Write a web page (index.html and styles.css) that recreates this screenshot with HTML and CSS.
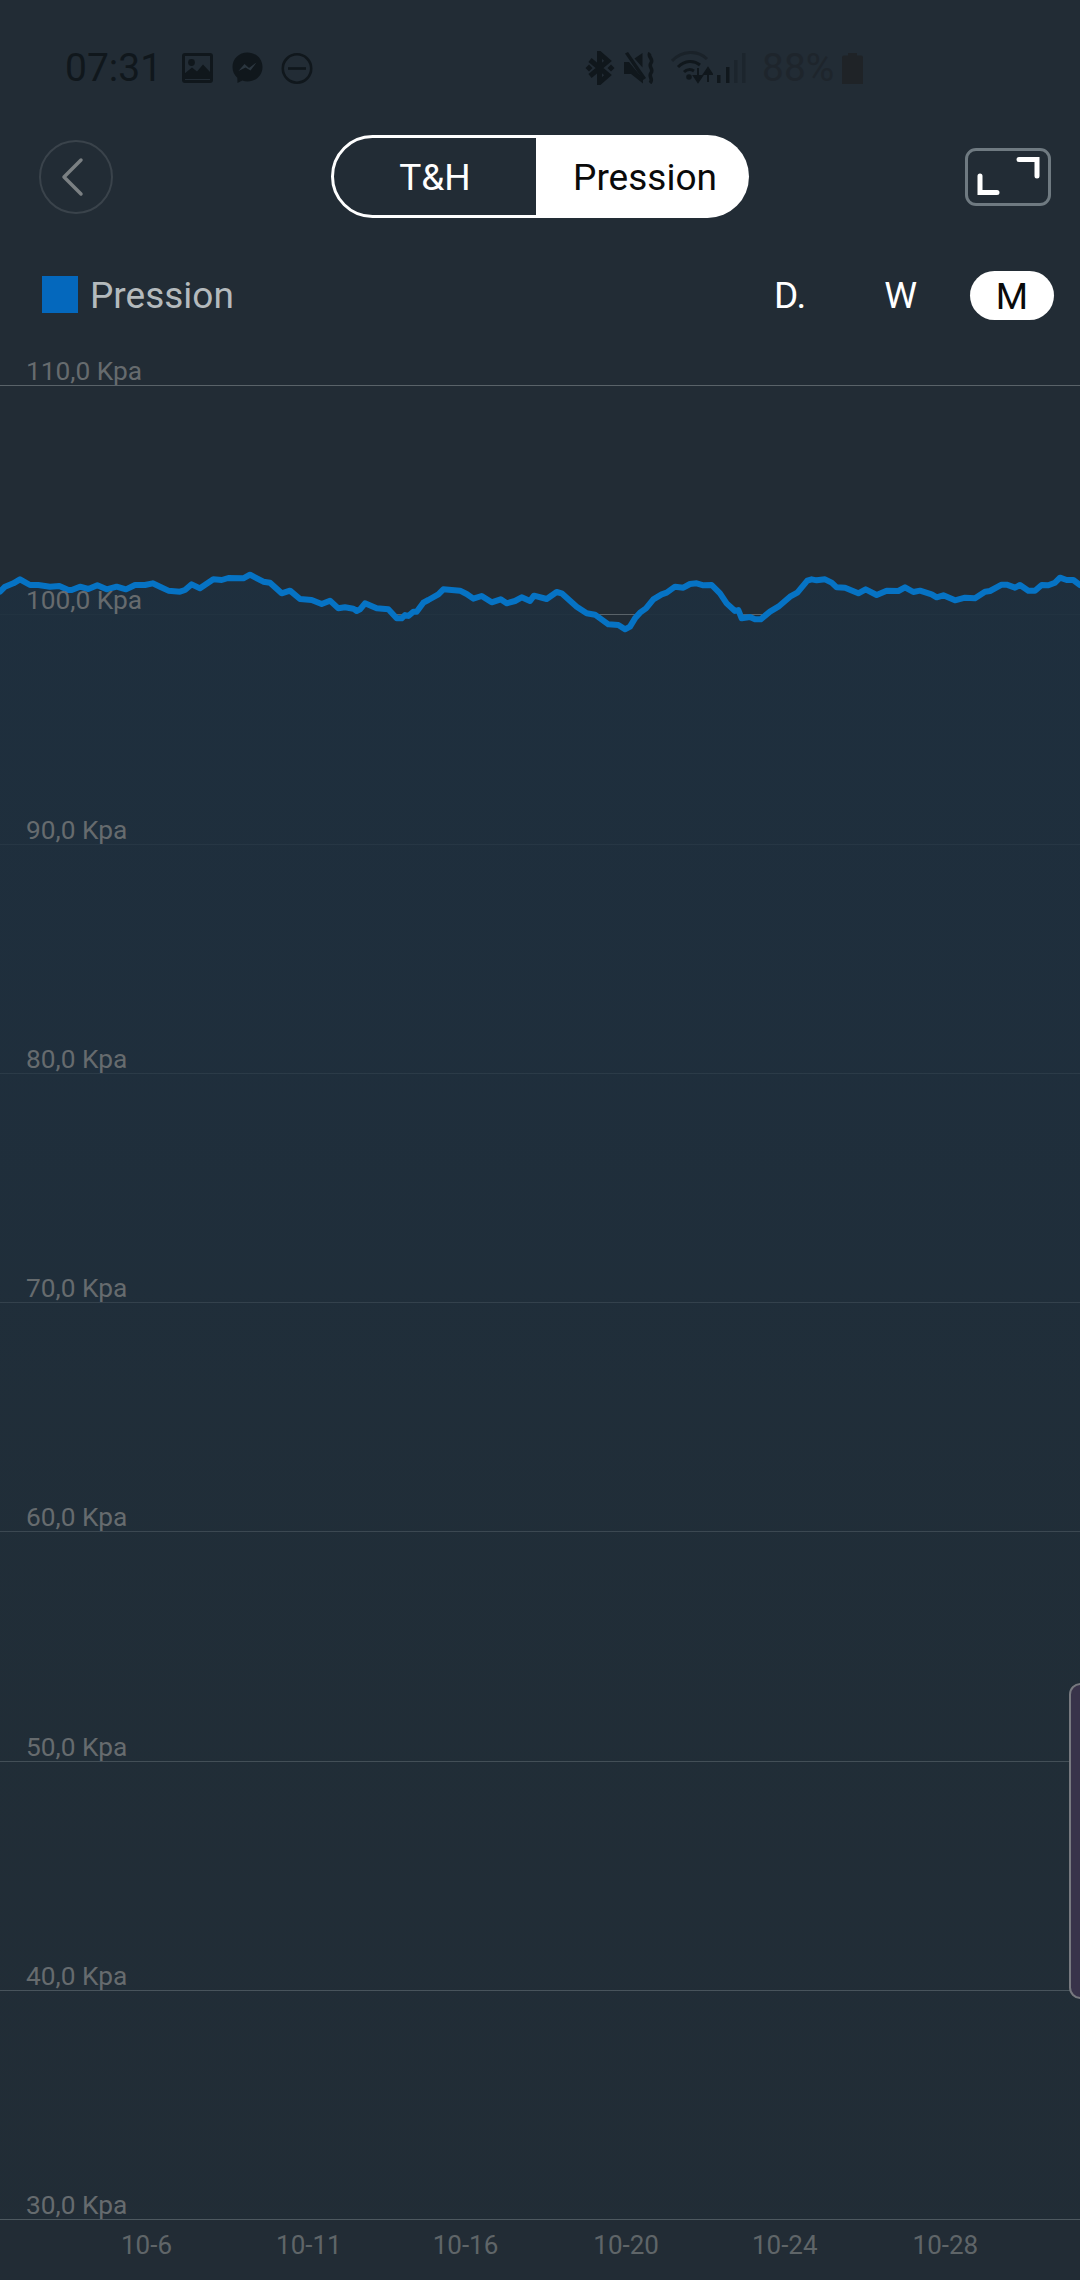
FILE: index.html
```html
<!DOCTYPE html>
<html lang="fr">
<head>
<meta charset="utf-8">
<title>Pression</title>
<link rel="stylesheet" href="styles.css">
</head>
<body>
<div class="app">
  <div class="status">
    <span class="time">07:31</span>
    <svg class="ic ic-image" width="31" height="30" viewBox="0 0 31 30"><rect x="1.500" y="1.500" width="28" height="27" rx="1.500" fill="none" stroke="#10171c" stroke-width="3"/><circle cx="9.500" cy="9.500" r="3.400" fill="#10171c"/><path d="M2 26 L2 21 L10 14.500 L15 18.500 L21 11.500 L29 20 L29 26 Z" fill="#10171c"/></svg>
    <svg class="ic ic-msg" width="31" height="32" viewBox="0 0 31 32"><path d="M15.500 0.500C7 0.500 0.500 6.800 0.500 15C0.500 19.400 2.300 23.100 5.300 25.700L5.500 31L10.300 28.600C12 29.200 13.700 29.500 15.500 29.500C24 29.500 30.500 23.200 30.500 15C30.500 6.800 24 0.500 15.500 0.500Z" fill="#10171c"/><path d="M6.500 19 L12.500 12 L17 16 L24.500 10.500 L18.500 18.500 L13.500 15.500 Z" fill="#2b363f"/></svg>
    <svg class="ic ic-dnd" width="32" height="33" viewBox="0 0 32 33"><circle cx="16" cy="16.500" r="14.200" fill="none" stroke="#10171c" stroke-width="2.600"/><path d="M7 16.500H25" stroke="#10171c" stroke-width="2.600"/></svg>
    <div class="status-right">
      <svg class="ic ic-bt" width="30" height="34" viewBox="0 0 30 34"><path d="M5 9 L23 24 L14.500 31.500 V2.500 L23 10 L5 25" fill="none" stroke="#10171c" stroke-width="5"/><path d="M0.500 17 L4 13.500 L7.500 17 L4 20.500 Z M22.500 17 L26 13.500 L29.500 17 L26 20.500 Z" fill="#10171c"/></svg>
      <svg class="ic ic-mute" width="32" height="32" viewBox="0 0 32 32"><path d="M0 10H5L19 27V31.500L7 22H0Z" fill="#10171c"/><path d="M10.500 6.500L18.500 1V15.500Z" fill="#10171c"/><path d="M1 1.500L4 0L22 26L19 28Z" fill="#10171c"/><path d="M26 1C23 4.500 30 7 27 11C24 15 30 17 27 21C24 25 30 27 26 31" fill="none" stroke="#10171c" stroke-width="3.600"/></svg>
      <svg class="ic ic-wifi" width="42" height="34" viewBox="0 0 42 34"><path d="M1 10C11 -1 27 -1 36 8" fill="none" stroke="#1a2229" stroke-width="3"/><path d="M7 16C14 9 23 9 29 14" fill="none" stroke="#10171c" stroke-width="3"/><path d="M13 21C16 18 20 18 23 20" fill="none" stroke="#10171c" stroke-width="3"/><circle cx="18" cy="26" r="2.800" fill="#10171c"/><path d="M27 17V28M23 25L27 31L31 25Z" fill="#10171c" stroke="#10171c" stroke-width="2"/><path d="M37 31V19M33 23L37 17L41 23Z" fill="#10171c" stroke="#10171c" stroke-width="2"/></svg>
      <svg class="ic ic-sig" width="29" height="30" viewBox="0 0 29 30"><rect x="0" y="22" width="3.500" height="8" fill="#10171c"/><rect x="9" y="14" width="3.500" height="16" fill="#10171c"/><rect x="17" y="7" width="3.500" height="23" fill="#1c252d"/><rect x="25" y="0" width="3.500" height="30" fill="#1c252d"/></svg>
      <span class="pct">88%</span>
      <svg class="ic ic-bat" width="21" height="31" viewBox="0 0 21 31"><path d="M6 0H15V2.500H19Q21 2.500 21 4.500V31H0V4.500Q0 2.500 2 2.500H6Z" fill="#1f2327"/></svg>
    </div>
  </div>

  <div class="nav">
    <div class="back"><svg width="30" height="40" viewBox="0 0 30 40"><path d="M22 3 L5 20 L22 37" fill="none" stroke="#7b8083" stroke-width="3.500" stroke-linecap="round" stroke-linejoin="round"/></svg></div>
    <div class="seg">
      <div class="seg-left">T&amp;H</div>
      <div class="seg-right">Pression</div>
    </div>
    <div class="full"><svg width="80" height="52" viewBox="0 0 80 52"><path d="M12 25 V41.500 H29" fill="none" stroke="#fff" stroke-width="5" stroke-linecap="round"/><path d="M51 8.500 H69 V25" fill="none" stroke="#fff" stroke-width="5" stroke-linecap="round"/></svg></div>
  </div>

  <div class="legend">
    <span class="swatch"></span>
    <span class="legend-name">Pression</span>
    <div class="ranges">
      <span class="range range-d">D.</span>
      <span class="range range-w">W</span>
      <span class="range range-m">M</span>
    </div>
  </div>

  <div class="chart">
    <div class="row row-first"><span class="ylab">110,0 Kpa</span></div>
    <div class="row"><span class="ylab">100,0 Kpa</span></div>
    <div class="row"><span class="ylab">90,0 Kpa</span></div>
    <div class="row"><span class="ylab">80,0 Kpa</span></div>
    <div class="row"><span class="ylab">70,0 Kpa</span></div>
    <div class="row"><span class="ylab">60,0 Kpa</span></div>
    <div class="row"><span class="ylab">50,0 Kpa</span></div>
    <div class="row"><span class="ylab">40,0 Kpa</span></div>
    <div class="row"><span class="ylab">30,0 Kpa</span></div>
    <svg class="plot" width="1080" height="1870" viewBox="0 0 3240 5610">
      <defs>
        <linearGradient id="under" x1="0" y1="0" x2="0" y2="1">
          <stop offset="0" stop-color="#1e2f3e" stop-opacity="0.95"/>
          <stop offset="0.3" stop-color="#1e2f3e" stop-opacity="0.78"/>
          <stop offset="0.7" stop-color="#1f2f3a" stop-opacity="0.4"/>
          <stop offset="1" stop-color="#1f2f3a" stop-opacity="0.2"/>
        </linearGradient>
      </defs>
      <g transform="translate(0,570)">
        <polygon fill="url(#under)" points="0,155 15,140 40,130 60,118 90,135 115,135 150,140 178,138 205,150 215,150 240,140 265,147 292,136 320,148 350,140 378,148 405,135 435,135 458,130 480,140 505,152 540,155 555,150 575,133 600,145 640,118 665,120 685,114 730,115 750,104 790,125 810,128 845,160 870,152 900,177 935,180 965,192 990,182 1015,205 1035,202 1060,206 1070,213 1080,208 1095,190 1130,205 1165,208 1190,235 1205,235 1215,225 1225,228 1240,215 1250,215 1270,188 1285,180 1315,163 1330,148 1380,152 1400,162 1420,176 1445,168 1475,187 1502,178 1520,190 1545,183 1565,172 1590,183 1602,167 1640,177 1670,156 1685,160 1730,200 1760,220 1785,224 1825,253 1855,255 1875,268 1890,260 1905,235 1920,218 1938,205 1960,178 1985,163 2000,158 2025,140 2050,143 2070,132 2090,130 2110,136 2135,135 2160,160 2180,190 2205,213 2215,210 2225,235 2250,231 2265,238 2282,238 2310,215 2335,200 2370,170 2392,158 2422,122 2435,118 2450,121 2475,118 2495,128 2510,142 2535,143 2575,160 2597,148 2630,165 2660,152 2695,153 2715,142 2740,156 2760,152 2795,163 2810,172 2830,166 2865,181 2895,173 2925,175 2955,155 2970,153 3005,134 3020,134 3045,143 3060,135 3085,152 3105,152 3125,135 3145,136 3165,128 3180,113 3200,120 3220,120 3240,135 3240,5040 0,5040"/>
        <polyline fill="none" stroke="#0673c4" stroke-width="18" stroke-linejoin="round" stroke-linecap="round" points="0,155 15,140 40,130 60,118 90,135 115,135 150,140 178,138 205,150 215,150 240,140 265,147 292,136 320,148 350,140 378,148 405,135 435,135 458,130 480,140 505,152 540,155 555,150 575,133 600,145 640,118 665,120 685,114 730,115 750,104 790,125 810,128 845,160 870,152 900,177 935,180 965,192 990,182 1015,205 1035,202 1060,206 1070,213 1080,208 1095,190 1130,205 1165,208 1190,235 1205,235 1215,225 1225,228 1240,215 1250,215 1270,188 1285,180 1315,163 1330,148 1380,152 1400,162 1420,176 1445,168 1475,187 1502,178 1520,190 1545,183 1565,172 1590,183 1602,167 1640,177 1670,156 1685,160 1730,200 1760,220 1785,224 1825,253 1855,255 1875,268 1890,260 1905,235 1920,218 1938,205 1960,178 1985,163 2000,158 2025,140 2050,143 2070,132 2090,130 2110,136 2135,135 2160,160 2180,190 2205,213 2215,210 2225,235 2250,231 2265,238 2282,238 2310,215 2335,200 2370,170 2392,158 2422,122 2435,118 2450,121 2475,118 2495,128 2510,142 2535,143 2575,160 2597,148 2630,165 2660,152 2695,153 2715,142 2740,156 2760,152 2795,163 2810,172 2830,166 2865,181 2895,173 2925,175 2955,155 2970,153 3005,134 3020,134 3045,143 3060,135 3085,152 3105,152 3125,135 3145,136 3165,128 3180,113 3200,120 3220,120 3240,135"/>
      </g>
    </svg>
    <div class="handle"></div>
  </div>

  <div class="axis">
    <span class="tick tick-1">10-6</span>
    <span class="tick tick-2">10-11</span>
    <span class="tick tick-3">10-16</span>
    <span class="tick tick-4">10-20</span>
    <span class="tick tick-5">10-24</span>
    <span class="tick tick-6">10-28</span>
  </div>
</div>
</body>
</html>
```
FILE: styles.css
```css
* { box-sizing: border-box; }
html, body { margin: 0; padding: 0; }
body { background: #222c35; font-family: Roboto, "Liberation Sans", sans-serif; }

.app { width: 1080px; height: 2280px; display: flex; flex-direction: column; overflow: hidden; background: #222c35; }

/* status bar */
.status { height: 135px; flex: none; display: flex; align-items: center; padding: 1px 0 0 65px; }
.time { font-size: 39px; line-height: 44px; color: #10171c; width: 93px; white-space: nowrap; }
.ic { display: block; flex: none; }
.ic-image { margin-left: 24px; }
.ic-msg { margin-left: 19px; }
.ic-dnd { margin-left: 18px; }
.status-right { display: flex; align-items: center; margin-left: 272px; }
.ic-mute { margin-left: 9px; }
.ic-wifi { margin-left: 15px; }
.ic-sig { margin-left: 4px; }
.pct { font-size: 39px; line-height: 44px; color: #1e252c; margin-left: 16px; width: 80px; white-space: nowrap; }

/* nav */
.nav { height: 83px; flex: none; display: flex; align-items: center; padding-left: 39px; }
.back { width: 74px; height: 74px; border-radius: 50%; border: 2px solid #3a434b; display: flex; align-items: center; justify-content: center; padding-right: 4px; flex: none; }
.back svg { display: block; }
.seg { display: flex; width: 418px; height: 83px; margin-left: 218px; flex: none; font-size: 37px; }
.seg-left { width: 208px; border: 3px solid #fff; border-radius: 42px 0 0 42px; color: #fff; display: flex; align-items: center; justify-content: center; padding-top: 1px; }
.seg-right { flex: 1; background: #fff; color: #0a0a0a; border-radius: 0 42px 42px 0; display: flex; align-items: center; justify-content: center; padding-left: 2px; padding-top: 1px; }
.full { width: 86px; height: 58px; margin-left: 216px; border: 3px solid #6f7a81; border-radius: 11px; flex: none; display: flex; align-items: center; justify-content: center; }
.full svg { display: block; }

/* legend */
.legend { height: 132px; flex: none; display: flex; align-items: flex-start; padding: 52px 26px 0 42px; }
.swatch { width: 36px; height: 37px; margin-top: 6px; background: #0468bd; flex: none; }
.legend-name { font-size: 37px; line-height: 49px; color: #b4babd; margin-left: 12px; padding-top: 1px; }
.ranges { margin-left: auto; display: flex; align-items: center; font-size: 37px; line-height: 49px; color: #fff; }
.range-d { margin-right: 78px; padding-top: 1px; }
.range-w { margin-right: 53px; padding-top: 1px; }
.range-m { width: 84px; height: 49px; background: #fff; color: #0a0a0a; border-radius: 25px; text-align: center; padding-top: 1px; }

/* chart */
.chart { flex: 1; position: relative; min-height: 0; }
.row { height: 229.250px; display: flex; align-items: flex-end; border-bottom: 1px solid #5a6369; padding: 0 0 0 26px; }
.row-first { height: 36px; }
.ylab { font-size: 26.300px; line-height: 28px; color: #666b6e; white-space: nowrap; position: relative; z-index: 1; }
.plot { position: absolute; left: 0; top: 0; display: block; }
.handle { position: absolute; right: -12px; top: 1333px; width: 23px; height: 316px; background: #38334a; border: 2px solid #77797f; border-radius: 20px; }

/* x axis */
.axis { height: 61px; flex: none; display: flex; align-items: flex-start; font-size: 26px; line-height: 32px; padding-top: 10px; color: #5f6568; }
.tick { white-space: nowrap; }
.tick-1 { margin-left: 121px; }
.tick-2 { margin-left: 104px; }
.tick-3 { margin-left: 91px; }
.tick-4 { margin-left: 95px; }
.tick-5 { margin-left: 93px; }
.tick-6 { margin-left: 95px; }
```
